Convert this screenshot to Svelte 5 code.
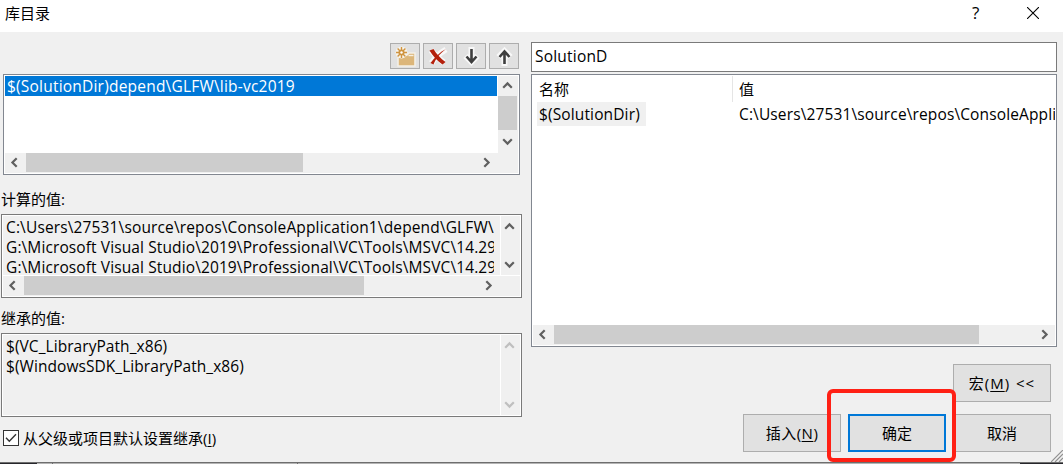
<script>
  let inherit = $state(true)
  let filter = $state('SolutionD')

  const directories = ['$(SolutionDir)depend\\GLFW\\lib-vc2019']
  const evaluated = [
    'C:\\Users\\27531\\source\\repos\\ConsoleApplication1\\depend\\GLFW\\',
    'G:\\Microsoft Visual Studio\\2019\\Professional\\VC\\Tools\\MSVC\\14.29',
    'G:\\Microsoft Visual Studio\\2019\\Professional\\VC\\Tools\\MSVC\\14.29'
  ]
  const inherited = ['$(VC_LibraryPath_x86)', '$(WindowsSDK_LibraryPath_x86)']
  const macros = [
    { name: '$(SolutionDir)', value: 'C:\\Users\\27531\\source\\repos\\ConsoleAppli' }
  ]
</script>

{#snippet chevron(dir)}
  <svg class="chevron to-{dir}" width="11" height="11" viewBox="0 0 11 11" fill="none" stroke="currentColor" stroke-width="2.2">
    <path d="M1.200 7.700 5.500 3.400 9.800 7.700" />
  </svg>
{/snippet}

<div class="dialog">
  <header class="titlebar">
    <span class="title">库目录</span>
    <span class="help">?</span>
    <svg class="close" width="12" height="12" viewBox="0 0 12 12" stroke="#000" stroke-width="1.1"><path d="M0 0 12 12M12 0 0 12" /></svg>
  </header>

  <main class="body">
    <section class="left">
      <div class="toolbar">
        <button class="tool" aria-label="新行">
          <svg width="28" height="24" viewBox="0 0 28 24">
            <path d="M7 11h9l2-2h6v13H7z" fill="#dcb67a" stroke="#f3efe6" stroke-width="1.6" />
            <path d="M17.500 11.500h5" stroke="#f6f0e2" stroke-width="1.4" />
            <circle cx="10.500" cy="8.500" r="6" fill="#f6f3ec" />
            <path d="M10.500 3v11M5 8.500h11M6.600 4.600l7.800 7.800M14.400 4.600l-7.800 7.800" stroke="#cf9440" stroke-width="1.400" />
            <circle cx="10.500" cy="8.500" r="3" fill="#cf9440" />
            <circle cx="10.500" cy="8.500" r="1.200" fill="#fff" />
          </svg>
        </button>
        <button class="tool" aria-label="删除">
          <svg width="28" height="24" viewBox="0 0 28 24" fill="none">
            <path d="M7 6.500c4 4 8 9 13 12M22 5.500C16 9 11 14 7.500 19" stroke="#f8f8f8" stroke-width="6" stroke-linejoin="round" />
            <path d="M5.500 6.500 9.500 5c3 5 7 9.500 12 13L18.500 20.500C13 17 9 12 5.500 6.500z" fill="#b4200c" />
            <path d="M22 5C16 8 11 13 6.500 19L9.500 20.500C12 14 16 9.500 22 5z" fill="#b4200c" />
          </svg>
        </button>
        <button class="tool" aria-label="下移">
          <svg width="28" height="24" viewBox="0 0 28 24" fill="none">
            <path d="M14.500 3v14M8.500 12l6 6 6-6" stroke="#f8f8f8" stroke-width="6" />
            <path d="M14.500 5v13M9.500 12.500l5 5.500 5-5.500" stroke="#3f3f3f" stroke-width="2.600" />
          </svg>
        </button>
        <button class="tool" aria-label="上移">
          <svg width="28" height="24" viewBox="0 0 28 24" fill="none">
            <path d="M14.500 22V8M8.500 13l6-6 6 6" stroke="#f8f8f8" stroke-width="6" />
            <path d="M14.500 20V7M9.500 13l5-5.500 5 5.500" stroke="#3f3f3f" stroke-width="2.600" />
          </svg>
        </button>
      </div>

      <div class="box dirs">
        <div class="lines">
          {#each directories as dir}
            <div class="row selected">{dir}</div>
          {/each}
        </div>
        <div class="vbar">
          {@render chevron('up')}
          <div class="thumb"></div>
          {@render chevron('down')}
        </div>
        <div class="hbar">
          {@render chevron('left')}
          <div class="thumb"></div>
          {@render chevron('right')}
        </div>
      </div>

      <div class="label">计算的值:</div>
      <div class="box evaluated">
        <div class="lines">
          {#each evaluated as line}
            <div class="line">{line}</div>
          {/each}
        </div>
        <div class="vbar">
          {@render chevron('up')}
          {@render chevron('down')}
        </div>
        <div class="hbar">
          {@render chevron('left')}
          <div class="thumb"></div>
          {@render chevron('right')}
        </div>
      </div>

      <div class="label second">继承的值:</div>
      <div class="box inherited">
        <div class="lines">
          {#each inherited as line}
            <div class="line">{line}</div>
          {/each}
        </div>
        <div class="vbar disabled">
          {@render chevron('up')}
          {@render chevron('down')}
        </div>
      </div>

      <label class="check">
        <input type="checkbox" bind:checked={inherit} />
        <span class="tick">
          {#if inherit}
            <svg width="14" height="14" viewBox="0 0 14 14" fill="none" stroke="#333" stroke-width="1.4"><path d="M2 6.800 5.300 10.200 12 3.200" /></svg>
          {/if}
        </span>
        <span class="check-text">从父级或项目默认设置继承(<u>I</u>)</span>
      </label>
    </section>

    <section class="right">
      <input class="filter" bind:value={filter} spellcheck="false" />
      <div class="macros">
        <div class="table">
          <div class="head">
            <span class="name">名称</span>
            <span class="value">值</span>
          </div>
          {#each macros as macro}
            <div class="entry">
              <span class="name"><span class="cell">{macro.name}</span></span>
              <span class="value">{macro.value}</span>
            </div>
          {/each}
        </div>
        <div class="hbar">
          {@render chevron('left')}
          <div class="thumb"></div>
          {@render chevron('right')}
        </div>
      </div>
      <div class="actions">
        <button class="btn macro-btn">宏(<u>M</u>) &lt;&lt;</button>
        <button class="btn insert">插入(<u>N</u>)</button>
        <button class="btn primary">确定</button>
        <button class="btn">取消</button>
        <div class="highlight"></div>
      </div>
    </section>
  </main>

  <svg class="grip" width="12" height="12" viewBox="0 0 12 12" stroke="#8f8f8f" stroke-width="1.2"><path d="M0 12 12 0M4 12l8-8M8 12l4-4" /></svg>
  <footer class="behind">
    <i class="dark"></i><i class="gap"></i><i class="mid"></i><i class="tail"></i><i class="dark end"></i>
  </footer>
</div>

<style>
  :global(body) {
    margin: 0;
    overflow: hidden;
  }

  .dialog {
    position: relative;
    display: flex;
    flex-direction: column;
    width: 1063px;
    height: 464px;
    overflow: hidden;
    background: #f0f0f0;
    color: #000;
    font-family: 'Open Sans', 'Noto Sans CJK SC', sans-serif;
    font-size: 15px;
    line-height: 20px;
    white-space: nowrap;
  }

  .dialog * {
    box-sizing: border-box;
  }

  button,
  input {
    font: inherit;
    color: inherit;
    margin: 0;
  }

  u {
    text-underline-offset: 2px;
    text-decoration-thickness: 1px;
  }

  .titlebar {
    flex: none;
    display: flex;
    align-items: center;
    height: 32px;
    padding: 0 24px 6px 5px;
    background: #fff;
  }

  .title {
    flex: 1;
  }

  .help {
    width: 8px;
    margin-right: 47px;
    font-size: 17px;
  }

  .body {
    flex: none;
    display: flex;
    height: 430px;
  }

  .left {
    flex: none;
    width: 531px;
    padding: 11px 9px 0 1px;
  }

  .toolbar {
    display: flex;
    justify-content: flex-end;
    gap: 3px;
    padding-right: 3px;
    height: 31px;
  }

  .tool {
    width: 30px;
    height: 26px;
    padding: 0;
    border: 1px solid #adadad;
    background: #e1e1e1;
  }

  .tool svg {
    display: block;
  }

  .box {
    display: grid;
    grid-template-columns: 1fr 20px;
    width: 521px;
    height: 84px;
    padding: 1px;
    border: 1px solid #7a7a7a;
    background: #f0f0f0;
    box-shadow: inset 0 0 0 1px #fff;
  }

  .lines {
    overflow: hidden;
    font-size: 15.5px;
  }

  .line {
    letter-spacing: 0.06px;
  }

  .evaluated .line {
    letter-spacing: 0.14px;
  }

  .evaluated .line + .line {
    letter-spacing: 0.11px;
  }

  .dirs {
    grid-template-rows: 77px 20px;
    width: 517px;
    height: 101px;
    margin-left: 2px;
    border-color: #828790;
    background: #fff;
  }

  .row {
    width: 492px;
    padding-left: 2px;
    letter-spacing: 0.21px;
  }

  .selected {
    background: #0078d7;
    color: #fff;
  }

  .evaluated {
    grid-template-rows: 59px 21px;
  }

  .evaluated .lines {
    margin-right: 6px;
    padding: 1px 0 0 3px;
  }

  .evaluated .vbar,
  .inherited .vbar {
    border-left: 1px solid #fff;
  }

  .evaluated .hbar {
    border-top: 1px solid #fff;
  }

  .inherited .lines {
    padding: 1px 0 0 3px;
  }

  .vbar,
  .hbar {
    display: flex;
    align-items: center;
    color: #606060;
    background: #f0f0f0;
  }

  .vbar {
    flex-direction: column;
    justify-content: space-between;
    padding: 5px 2px 5px 0;
  }

  .hbar {
    grid-column: 1 / -1;
    padding: 0 26px 1px 4px;
  }

  .thumb {
    flex: none;
    background: #cdcdcd;
  }

  .chevron {
    flex: none;
  }

  .to-down {
    transform: rotate(180deg);
  }

  .to-left {
    transform: rotate(-90deg);
  }

  .to-right {
    transform: rotate(90deg);
    margin-left: auto;
  }

  .dirs .vbar {
    padding: 4px 1px 6px 0;
  }

  .dirs .vbar .thumb {
    width: 19px;
    height: 34px;
    margin-top: -1px;
  }

  .hbar .thumb {
    width: 277px;
    height: 19px;
    margin-left: 6px;
  }

  .evaluated .hbar .thumb {
    width: 340px;
  }

  .disabled {
    color: #bfbfbf;
  }

  .label {
    height: 39px;
    padding-top: 14px;
  }

  .label.second {
    height: 35px;
    padding-top: 10px;
  }

  .check {
    display: flex;
    align-items: center;
    gap: 4px;
    margin: 11px 0 0 2px;
  }

  .check input {
    display: none;
  }

  .tick {
    display: flex;
    width: 16px;
    height: 16px;
    border: 1px solid #333;
    background: #fff;
  }

  .right {
    width: 526px;
    padding-top: 10px;
  }

  .filter {
    display: block;
    width: 526px;
    height: 30px;
    padding: 0 4px 2px 3px;
    border: 1px solid #7a7a7a;
    border-radius: 0;
    outline: none;
    background: #fff;
    font-size: 15.5px;
    letter-spacing: 0.2px;
  }

  .macros {
    display: flex;
    flex-direction: column;
    height: 273px;
    margin-top: 2px;
    padding: 1px;
    border: 1px solid #828790;
    background: #fff;
  }

  .table {
    flex: 1;
    overflow: hidden;
  }

  .head,
  .entry {
    display: flex;
    height: 26px;
  }

  .head {
    line-height: 26px;
  }

  .entry {
    font-size: 15.5px;
    letter-spacing: 0.13px;
    line-height: 25px;
  }

  .name {
    flex: none;
    width: 200px;
    padding-left: 4px;
  }

  .head .name {
    padding-left: 6px;
    border-right: 1px solid #e5e5e5;
  }

  .value {
    padding-left: 6px;
  }

  .cell {
    display: block;
    width: 109px;
    height: 24px;
    padding-left: 2px;
    background: #f0f0f0;
  }

  .macros .hbar {
    height: 20px;
    padding-right: 5px;
  }

  .macros .hbar .thumb {
    width: 425px;
  }

  .actions {
    position: relative;
    display: grid;
    grid-template-columns: repeat(3, 98px);
    justify-content: end;
    gap: 12px 7px;
    padding: 17px 6px 0 0;
  }

  .btn {
    height: 38px;
    padding: 0;
    border: 1px solid #adadad;
    background: #e1e1e1;
  }

  .macro-btn {
    grid-column: 3;
    letter-spacing: 1px;
    word-spacing: 1px;
  }

  .insert {
    letter-spacing: 0.5px;
  }

  .primary {
    border: 2px solid #0078d7;
  }

  /* marker drawn over the confirm button */
  .highlight {
    position: absolute;
    top: 42px;
    left: 296px;
    width: 129px;
    height: 73px;
    border: 4px solid #ff2015;
    border-radius: 6px;
    pointer-events: none;
  }

  .grip {
    position: absolute;
    right: 0;
    bottom: 2px;
  }

  .behind {
    display: flex;
    height: 2px;
    border-top: 1px solid #6e6e6e;
    background: #b4b4b4;
  }

  .behind i {
    height: 1px;
  }

  .dark {
    width: 37px;
    background: #26262b;
  }

  .gap {
    width: 15px;
  }

  .mid {
    width: 246px;
    border: solid #6e6e6e;
    border-width: 0 1px;
  }

  .tail {
    flex: 1;
  }

  .end {
    width: 43px;
  }
</style>
